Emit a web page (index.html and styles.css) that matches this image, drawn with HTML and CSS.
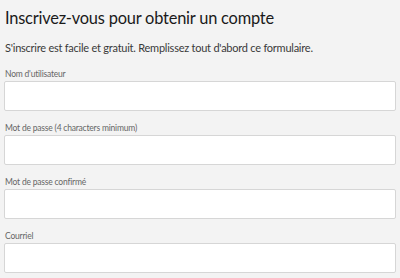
FILE: index.html
```html
<!DOCTYPE html>
<html lang="fr">
<head>
<meta charset="utf-8">
<link rel="stylesheet" href="styles.css">
</head>
<body>
<main class="page">
  <h1 class="title">Inscrivez-vous pour obtenir un compte</h1>
  <p class="intro">S'inscrire est facile et gratuit. Remplissez tout d'abord ce formulaire.</p>
  <form class="form">
    <label class="field">
      <span class="label">Nom d'utilisateur</span>
      <input class="input" type="text">
    </label>
    <label class="field">
      <span class="label">Mot de passe (4 characters minimum)</span>
      <input class="input" type="password">
    </label>
    <label class="field">
      <span class="label">Mot de passe confirmé</span>
      <input class="input" type="password">
    </label>
    <label class="field">
      <span class="label">Courriel</span>
      <input class="input" type="email">
    </label>
  </form>
</main>
</body>
</html>
```
FILE: styles.css
```css
html, body {
  margin: 0;
  padding: 0;
  background: #f3f3f3;
}
body {
  font-family: Lato, "Open Sans", "Liberation Sans", sans-serif;
  color: #222;
}
.page {
  padding: 8px 4px 0 5px;
}
.title {
  margin: 0;
  font-size: 16.4px;
  letter-spacing: -0.2px;
  font-weight: 400;
  line-height: 20px;
  color: #1a1a1a;
}
.intro {
  margin: 13px 0 0;
  font-size: 11px;
  letter-spacing: -0.24px;
  line-height: 14px;
  color: #3a3a3a;
}
.form {
  display: flex;
  flex-direction: column;
  gap: 12px;
  margin-top: 14px;
}
.field {
  display: flex;
  flex-direction: column;
}
.label {
  font-size: 8.5px;
  letter-spacing: -0.2px;
  line-height: 10px;
  color: #666;
  margin-bottom: 2px;
}
.input {
  box-sizing: border-box;
  margin: 0 0 0 -1px;
  width: 392px;
  height: 30px;
  border: 1px solid #d6d6d6;
  border-radius: 2px;
  background: #fff;
  font: inherit;
}
```
